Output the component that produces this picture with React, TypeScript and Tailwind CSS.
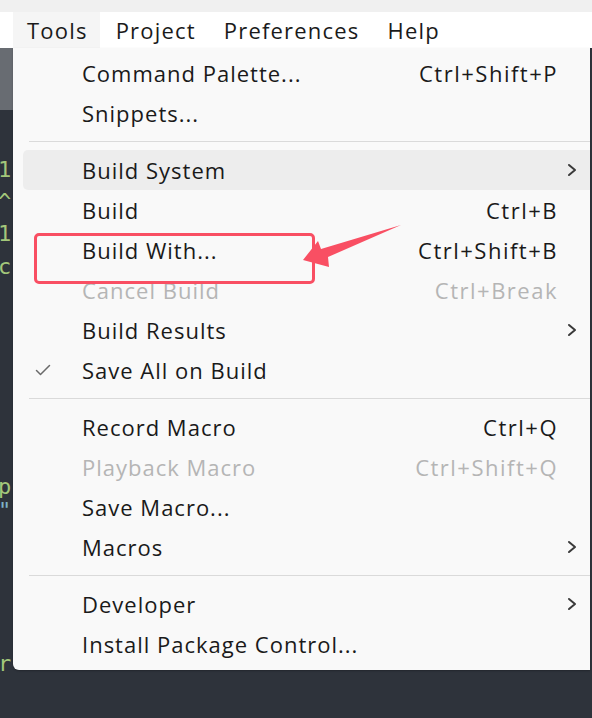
import React from "react";

type Item =
  | { kind: "sep" }
  | {
      kind: "item";
      label: string;
      shortcut?: string;
      sub?: boolean;
      disabled?: boolean;
      checked?: boolean;
      hover?: boolean;
    };

const items: Item[] = [
  { kind: "item", label: "Command Palette...", shortcut: "Ctrl+Shift+P" },
  { kind: "item", label: "Snippets..." },
  { kind: "sep" },
  { kind: "item", label: "Build System", sub: true, hover: true },
  { kind: "item", label: "Build", shortcut: "Ctrl+B" },
  { kind: "item", label: "Build With...", shortcut: "Ctrl+Shift+B" },
  { kind: "item", label: "Cancel Build", shortcut: "Ctrl+Break", disabled: true },
  { kind: "item", label: "Build Results", sub: true },
  { kind: "item", label: "Save All on Build", checked: true },
  { kind: "sep" },
  { kind: "item", label: "Record Macro", shortcut: "Ctrl+Q" },
  { kind: "item", label: "Playback Macro", shortcut: "Ctrl+Shift+Q", disabled: true },
  { kind: "item", label: "Save Macro..." },
  { kind: "item", label: "Macros", sub: true },
  { kind: "sep" },
  { kind: "item", label: "Developer", sub: true },
  { kind: "item", label: "Install Package Control..." },
];

function Chevron() {
  return (
    <svg width="12" height="14" viewBox="0 0 12 14" className="shrink-0">
      <path d="M3 2 L9 7 L3 12" fill="none" stroke="#3a3a3a" strokeWidth="2" strokeLinecap="round" strokeLinejoin="round" />
    </svg>
  );
}

function Check() {
  return (
    <svg width="16" height="14" viewBox="0 0 16 14">
      <path d="M1.5 7.5 L5.5 11.5 L14.5 2.5" fill="none" stroke="#6a6a6a" strokeWidth="1.5" strokeLinecap="round" strokeLinejoin="round" />
    </svg>
  );
}

const codeLines: { h: number; ch: string; color?: string }[] = [
  { h: 43, ch: "" },
  { h: 33, ch: "1" },
  { h: 31, ch: "^" },
  { h: 33, ch: "1" },
  { h: 33, ch: "c" },
  { h: 192, ch: "" },
  { h: 24, ch: "p" },
  { h: 24, ch: "\"", color: "#7fb3c8" },
  { h: 124, ch: "" },
  { h: 33, ch: "r" },
];

export default function App() {
  return (
    <div
      className="relative w-[592px] h-[718px] overflow-hidden bg-[#2e333b]"
      style={{ fontFamily: '"Open Sans", "Noto Sans", sans-serif' }}
    >
      {/* top strip */}
      <div className="h-[12px] bg-[#f0f0f0]" />
      {/* menubar */}
      <div className="h-[36px] bg-white flex items-center pl-[13px] text-[22px] tracking-[1.2px] text-[#1a1a1a]">
        <div className="h-full flex items-center pl-[14px] pr-[12px] bg-[#f5f5f5]">Tools</div>
        <div className="h-full flex items-center pl-[16px] pr-[12px]">Project</div>
        <div className="h-full flex items-center pl-[16px] pr-[12px]">Preferences</div>
        <div className="h-full flex items-center pl-[16px] pr-[12px]">Help</div>
      </div>
      {/* editor area */}
      <div className="relative h-[670px] flex">
        <div className="w-[13px] h-full overflow-hidden flex flex-col">
          <div className="h-[62px] shrink-0 bg-[#686c72]" />
          <div
            className="flex flex-col text-[#a3c77a] text-[22px] -ml-[2px]"
            style={{ fontFamily: '"DejaVu Sans Mono", monospace' }}
          >
            {codeLines.map((l, i) => (
              <div
                key={i}
                className="shrink-0 flex items-center leading-none"
                style={{ height: l.h, color: l.color }}
              >
                {l.ch}
              </div>
            ))}
          </div>
        </div>
        {/* dropdown menu */}
        <div className="absolute left-[13px] top-0 w-[577px] h-[622px] bg-[#f9f9f9] rounded-bl-[6px] pt-[5px] text-[22px] tracking-[1px] text-[#1a1a1a] shadow-[0_1px_2px_rgba(0,0,0,0.25)]">
          {items.map((it, i) =>
            it.kind === "sep" ? (
              <div key={i} className="h-[17px] flex items-center pl-[16px]">
                <div className="h-px w-full bg-[#dadada]" />
              </div>
            ) : (
              <div key={i} className="h-[40px] pl-[10px]">
                <div
                  className={
                    "relative h-full flex items-center rounded-l-[5px] " +
                    (it.hover ? "bg-[#ededed]" : "")
                  }
                >
                  <div className="w-[59px] flex items-center pl-[12px]">
                    {it.checked ? <Check /> : null}
                  </div>
                  <div className={"flex-1 " + (it.disabled ? "text-[#b5b5b5]" : "")}>{it.label}</div>
                  <div className={"pr-[32px] tracking-[1.5px] " + (it.disabled ? "text-[#b5b5b5]" : "")}>
                    {it.shortcut ? it.shortcut : null}
                  </div>
                  {it.sub ? (
                    <div className="absolute right-[12px] flex items-center">
                      <Chevron />
                    </div>
                  ) : null}
                </div>
              </div>
            )
          )}
          {/* red highlight box */}
          <div className="absolute left-[21px] top-[185px] w-[281px] h-[51px] border-[3px] border-[#f94f63] rounded-[5px]" />
        </div>
      </div>
      {/* arrow */}
      <svg className="absolute left-[295px] top-[218px]" width="110" height="55" viewBox="295 218 110 55">
        <polygon points="303,260 318,241 321,249 401,225 328,257 329,267" fill="#f94f63" />
      </svg>
    </div>
  );
}
